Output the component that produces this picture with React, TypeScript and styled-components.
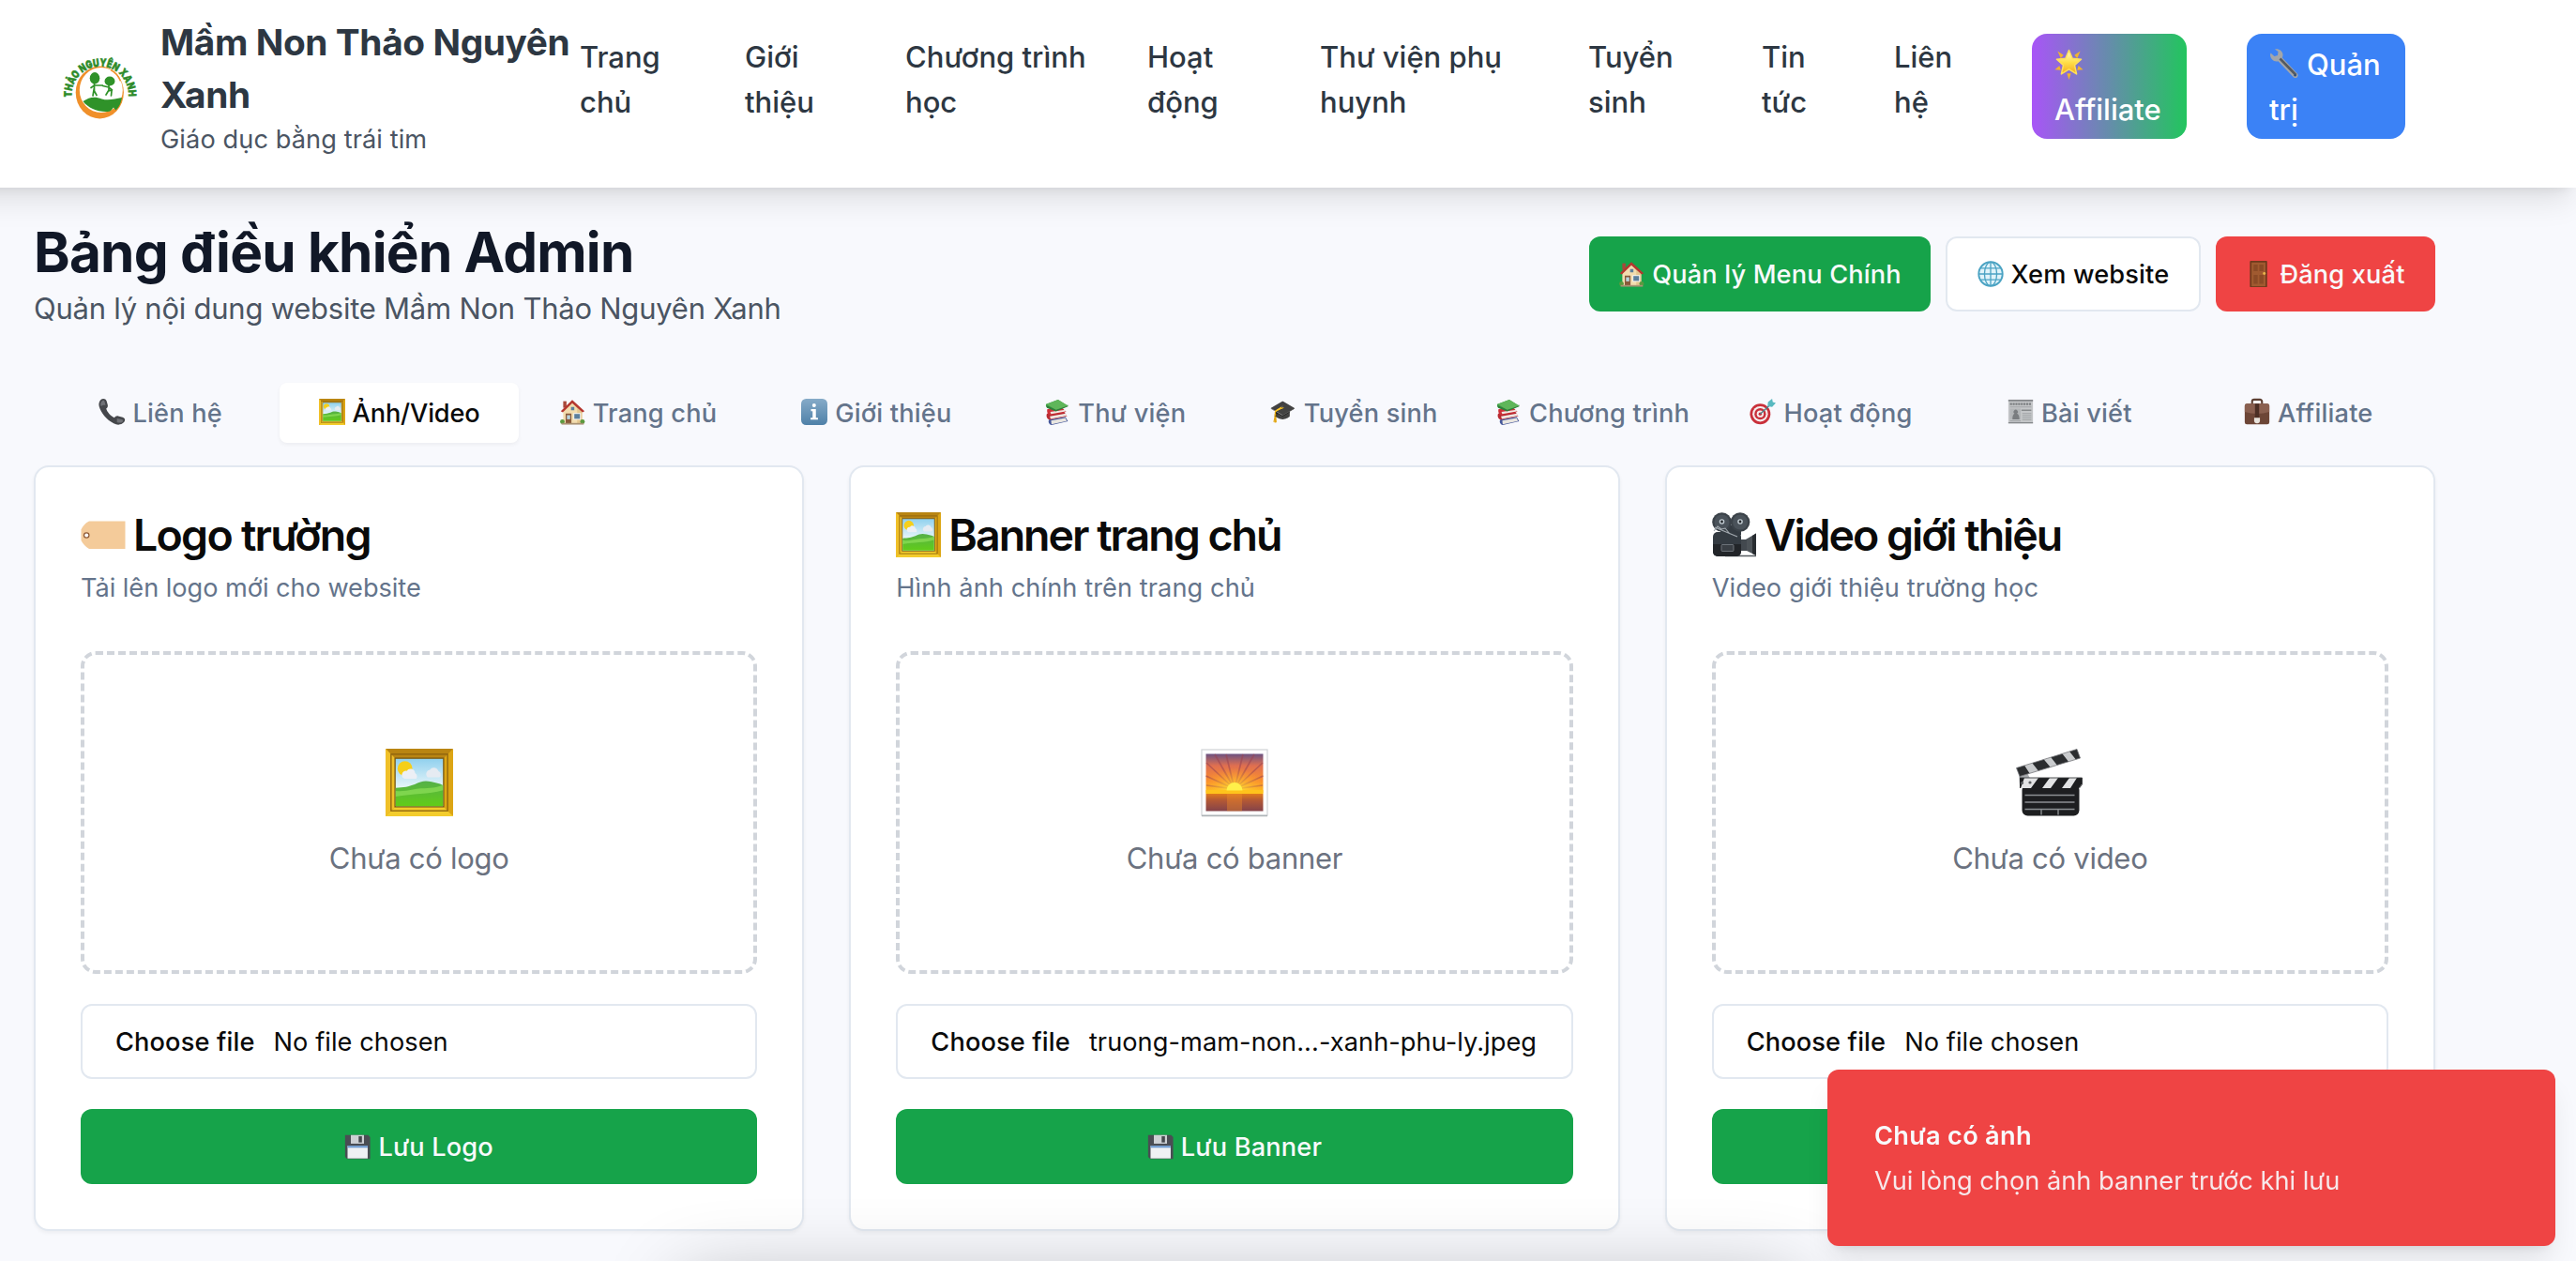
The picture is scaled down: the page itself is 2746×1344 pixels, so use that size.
import React from "react";
import styled, { createGlobalStyle, css } from "styled-components";

const GlobalStyle = createGlobalStyle`
  *, *::before, *::after { box-sizing: border-box; }
  html, body { margin: 0; background: #f8f9fd; }
  body {
    height: 1344px;
    overflow: hidden;
    font-family: Inter, "Noto Sans", sans-serif;
    color: #0a0a0a;
    -webkit-font-smoothing: antialiased;
  }
`;

/* ---------- icons ---------- */

type IconName =
  | "house" | "globe" | "door" | "phone" | "frame" | "info" | "books" | "cap"
  | "target" | "news" | "briefcase" | "tag" | "camera" | "sunrise" | "clapper"
  | "disk" | "star" | "wrench";

const IconBox = styled.span<{ $size: number; $dy?: number }>`
  display: inline-flex;
  flex: none;
  align-items: center;
  justify-content: center;
  width: ${(p) => p.$size}px;
  height: ${(p) => p.$size}px;
  font-family: "Noto Color Emoji", sans-serif;
  font-size: ${(p) => p.$size * 0.82}px;
  line-height: ${(p) => p.$size}px;
  letter-spacing: 0;
  transform: translateY(${(p) => p.$dy ?? 0}px);

  svg {
    display: block;
    width: 100%;
    height: 100%;
    overflow: visible;
  }
`;

const glyphs: Partial<Record<IconName, string>> = {
  cap: "🎓",
};

const drawings: Partial<Record<IconName, React.ReactNode>> = {
  house: (
    <svg viewBox="0 0 32 32">
      <rect x="5" y="3" width="4" height="8" fill="#a8483a" />
      <path d="M5 13 16 4l12 9v17H5z" fill="#f2dcae" />
      <path d="M16 4l12 9v17h-6V12z" fill="#e4c68f" />
      <path d="M2 15 16 1.500 31 15l-2.500 1.500L16 5.500 4.500 16.500z" fill="#b5372f" />
      <rect x="8" y="18" width="7" height="12" fill="#8a5a3a" />
      <rect x="9.500" y="20" width="4" height="5" fill="#b9d4de" />
      <rect x="18" y="18" width="8" height="7" fill="#5c7f9c" stroke="#fff" strokeWidth="1" />
      <rect x="14.500" y="10" width="4" height="4" fill="#5c7f9c" />
      <circle cx="4" cy="28" r="2.800" fill="#5b9a3e" />
      <circle cx="28.500" cy="28" r="2.800" fill="#5b9a3e" />
      <rect x="3" y="29.500" width="27" height="2" fill="#a99274" />
    </svg>
  ),
  globe: (
    <svg viewBox="0 0 32 32" fill="none" stroke="#4ba3c3" strokeWidth="1.5">
      <circle cx="16" cy="16" r="14.500" fill="#e0f3fa" strokeWidth="2.200" />
      <ellipse cx="16" cy="16" rx="7.500" ry="14.500" />
      <path d="M16 1.500v29M1.500 16h29M3.500 9h25M3.500 23h25" />
    </svg>
  ),
  door: (
    <svg viewBox="0 0 32 32">
      <rect x="5" y="0" width="21" height="32" rx="1" fill="#6f3a1c" />
      <rect x="7" y="2" width="17" height="29" fill="#a05a30" />
      <path d="M9.500 4.500h5v8h-5zM16.500 4.500h5v8h-5zM9.500 17h5v11h-5zM16.500 17h5v11h-5z" fill="#8a4a26" />
      <circle cx="22.500" cy="15.500" r="1.700" fill="#e8b64c" />
    </svg>
  ),
  phone: (
    <svg viewBox="0 0 32 32">
      <path
        d="M2.500 1.500C5-1 8.500-.5 9.800 2.500l1.400 5c.5 2.200-.4 3.600-1.800 4.500 1.200 4.500 5.600 9.200 10.100 11 1-1.500 2.500-2.500 4.500-2l5.500 1.700c3 1 3.500 4 1.500 6-3 3.200-8 3.900-12.500 1.300C9.500 25.500 3 17 .8 9.500 0 6.500.7 3.500 2.500 1.500z"
        fill="#45474b"
      />
      <path d="M4 3c1.500-1.500 3-1 3.500.5L8.500 8C6.200 7 4.500 8 3 9c-.8-2.500-.5-4.500 1-6zM22.500 24l6.500 1.500c1 .5 1 2 0 3-2.200 1-4.500 1-6.500 0z" fill="#707277" />
    </svg>
  ),
  frame: (
    <svg viewBox="0 0 32 32">
      <defs>
        <linearGradient id="frameSky" x1="0" y1="0" x2="0" y2="1">
          <stop offset="0" stopColor="#8fd0ee" />
          <stop offset=".6" stopColor="#e6f5f9" />
        </linearGradient>
        <linearGradient id="frameHill" x1="0" y1="0" x2="0" y2="1">
          <stop offset="0" stopColor="#55b04a" />
          <stop offset="1" stopColor="#62cc18" />
        </linearGradient>
      </defs>
      <rect width="32" height="32" rx=".5" fill="#dca514" />
      <path d="M0 0h32l-4.500 4.500h-23z" fill="#b98512" />
      <path d="M0 32h32l-4.500-4.500h-23z" fill="#f3cc2c" />
      <path d="M0 0v32l4.500-4.500v-23z" fill="#f0c028" />
      <rect x="2.600" y="2.600" width="26.800" height="26.800" fill="none" stroke="#8f640e" strokeWidth=".6" />
      <rect x="4.500" y="4.500" width="23" height="23" fill="url(#frameSky)" stroke="#7a5a14" strokeWidth=".6" />
      <circle cx="9.200" cy="9.400" r="3.500" fill="#f5cf1a" />
      <path d="M8 13.500a2 2 0 0 1 2-3 2.200 2.200 0 0 1 4 1 1.800 1.800 0 0 1 .5 2.700H9z" fill="#eceff5" />
      <path d="M19.500 13a2 2 0 0 1 1.500-3 2.200 2.200 0 0 1 4 .6 1.800 1.800 0 0 1 .6 3H20z" fill="#e6ebf2" />
      <path d="M4.800 18.500c4 0 6-.6 9-1.600 3-1.600 5-2 8-1.200 2 .6 3.600.6 5.400 1.600v9.900H4.800z" fill="url(#frameHill)" />
      <path d="M4.800 20c5 .5 9-1 12-1.200 4 0 8-.6 10.400-1.600v2.500c-7 2-14 1.500-22.400 3z" fill="#8fdf5a" opacity=".7" />
    </svg>
  ),
  info: (
    <svg viewBox="0 0 32 32">
      <defs>
        <linearGradient id="infoFill" x1="0" y1="0" x2="0" y2="1">
          <stop offset="0" stopColor="#86abc8" />
          <stop offset="1" stopColor="#4f81a8" />
        </linearGradient>
      </defs>
      <rect width="32" height="32" rx="6" fill="url(#infoFill)" />
      <circle cx="15.800" cy="8" r="2.300" fill="#fff" />
      <path d="M12 12.500h6v10.500h2.500v2.500h-9V23H14v-8h-2z" fill="#fff" />
    </svg>
  ),
  books: (
    <svg viewBox="0 0 32 32">
      <path d="M6 25.500 26 22l3 5.500-20 4.500c-3-.5-4.500-4-3-6.500z" fill="#46589a" />
      <path d="M8.500 26.500 26 23.500l1.500 3.500-18.500 4z" fill="#e9e6e0" />
      <path d="M3.500 18 24 15.500l4 5.500-20.500 4.500c-4 0-5.500-4.500-4-7.500z" fill="#b92b32" />
      <path d="M7 21.500l19.500-3.500 1 2.500-19.500 4z" fill="#efe9e3" />
      <path d="M4 12.500 22 11l5 5-19 3.500c-4 0-5-4-4-7z" fill="#cf3038" />
      <path d="M7.500 16 26 13.500v2L8.500 18.500z" fill="#efe9e3" />
      <path d="M2.500 6.500 17 1l12 7.500-15 6L3 10.500c-1-1-1-3-.5-4z" fill="#3f9d49" />
      <path d="M3.500 8.500 14.500 13 29 7.500v2L14.500 15.500 3.500 11z" fill="#2f7d3a" />
      <path d="M2.500 6.500 17 1l12 7.500-14.500 5z" fill="#5fb65a" />
    </svg>
  ),
  target: (
    <svg viewBox="0 0 32 32">
      <circle cx="13" cy="18.500" r="12.500" fill="#c9303a" />
      <circle cx="13" cy="18.500" r="9.400" fill="#f6eeee" />
      <circle cx="13" cy="18.500" r="7" fill="#c9303a" />
      <circle cx="13" cy="18.500" r="4.200" fill="#f6eeee" />
      <circle cx="13" cy="18.500" r="2" fill="#c9303a" />
      <path d="M13 18.500 26 6.500" stroke="#4d7f86" strokeWidth="1.600" />
      <path d="m22 9 .5-5 5-4 .8 4 3.700 1-4.500 5z" fill="#58b9c0" />
    </svg>
  ),
  news: (
    <svg viewBox="0 0 32 32">
      <rect x="1" y="1" width="30" height="29" fill="#c4c6c8" />
      <path d="M1 1h30v2H1zM1 28.500h30V30H1z" fill="#85888b" />
      <path d="M3 6.300h26" stroke="#7c7f82" strokeWidth="2.600" strokeDasharray="2.500 .8" />
      <path d="M3 10h26M18 18h11M18 20.500h11M18 23h11M18 25.500h11M3 27h13" stroke="#9c9fa2" strokeWidth="1" />
      <path d="M17 14h12" stroke="#85888b" strokeWidth="1.600" />
      <rect x="3" y="12" width="13" height="13.500" fill="#b3b6b8" />
      <path d="M6 25c0-4 1-6 2.500-7a2.600 2.600 0 1 1 3 0c2 1 3 3 3 7z" fill="#7a7d80" />
    </svg>
  ),
  briefcase: (
    <svg viewBox="0 0 32 32">
      <path d="M10 7V3.500A2.500 2.500 0 0 1 12.500 1h7A2.500 2.500 0 0 1 22 3.500V7" fill="none" stroke="#5d4033" strokeWidth="2.400" />
      <rect x="1" y="6" width="30" height="25" rx="2.500" fill="#6d4637" />
      <path d="M1 9a3 3 0 0 1 3-3h24a3 3 0 0 1 3 3v7c-10 3-20 3-30 0z" fill="#8a6050" />
      <rect x="13.500" y="6" width="5" height="18" fill="#4c2f25" />
      <path d="M12.500 23h7v3.500a3.500 3.500 0 0 1-7 0z" fill="#e8e3dc" />
    </svg>
  ),
  tag: (
    <svg viewBox="0 0 48 48">
      <path d="M9 9.500h38.500v29.500H9C5.500 37 2 33.500.5 30V18.500C2 15 5.500 11 9 9.500z" fill="#f4cb9a" />
      <circle cx="6.200" cy="24.500" r="3.300" fill="#8f5a35" />
      <circle cx="6.200" cy="24.500" r="2" fill="#fff" />
    </svg>
  ),
  camera: (
    <svg viewBox="0 0 48 48">
      <path d="M35 29.500 47 22.500V46l-12-6z" fill="#4d5358" />
      <path d="M43 25 47 22.500V46l-4-2z" fill="#282c30" />
      <path d="M14 46.500h33" stroke="#565b60" strokeWidth="1.600" />
      <path d="M9 14h22v10H9z" fill="#343b42" />
      <rect x="1" y="21" width="30" height="26" rx="5" fill="#343b42" />
      <path d="M1 34h30v8a5 5 0 0 1-5 5H6a5 5 0 0 1-5-5z" fill="#222529" />
      <rect x="31" y="29" width="6" height="12" fill="#43494f" />
      <circle cx="10.500" cy="10.500" r="10.300" fill="#3b4249" />
      <circle cx="30" cy="10.500" r="10.300" fill="#3b4249" />
      <circle cx="10.500" cy="10.500" r="8" fill="#4a525a" />
      <circle cx="30" cy="10.500" r="8" fill="#4a525a" />
      <path d="m3 16 24 10M2 20l4-5 4 3 4-1 5 6" stroke="#a4abb1" strokeWidth="1.100" fill="none" />
      <circle cx="10.500" cy="10" r="2.800" fill="#c3cdd4" />
      <circle cx="30" cy="10" r="2.800" fill="#c3cdd4" />
      <circle cx="10.500" cy="10" r="1.400" fill="#22262a" />
      <circle cx="30" cy="10" r="1.400" fill="#22262a" />
      <rect x="10" y="34.500" width="13" height="7" rx="1" fill="#3a3f45" stroke="#7d838a" strokeWidth=".8" />
    </svg>
  ),
  sunrise: (
    <svg viewBox="0 0 72 72">
      <defs>
        <linearGradient id="dawnSky" x1="0" y1="0" x2="0" y2="1">
          <stop offset="0" stopColor="#6b5282" />
          <stop offset=".3" stopColor="#e06f50" />
          <stop offset=".7" stopColor="#fa8e2c" />
          <stop offset="1" stopColor="#ffc21e" />
        </linearGradient>
        <linearGradient id="dawnSea" x1="0" y1="0" x2="0" y2="1">
          <stop offset="0" stopColor="#e07a1c" />
          <stop offset=".35" stopColor="#b65a33" />
          <stop offset="1" stopColor="#84424a" />
        </linearGradient>
        <radialGradient id="dawnGlow" cx=".5" cy=".95" r=".6">
          <stop offset="0" stopColor="#ffe93a" />
          <stop offset="1" stopColor="#ffa52a" stopOpacity="0" />
        </radialGradient>
      </defs>
      <rect x="1" y="1" width="70" height="70" fill="#fff" stroke="#cfd3d6" strokeWidth="1.200" />
      <path d="M1 71.500h70" stroke="#aeb4b7" strokeWidth="1.400" />
      <rect x="5.500" y="5.500" width="61" height="42" fill="url(#dawnSky)" />
      <path
        d="M36 43 5.500 29M36 43 6 15M36 43 15 6M36 43 27 6M36 43l9-37M36 43 57 6M36 43l30-28M36 43l30.500-14M36 43l-30-4M36 43l30-4"
        stroke="#9c4450"
        strokeWidth="1.700"
        opacity=".55"
      />
      <rect x="5.500" y="5.500" width="61" height="42" fill="url(#dawnGlow)" />
      <rect x="5.500" y="44" width="61" height="4" fill="#ffc31c" />
      <rect x="5.500" y="48" width="61" height="18.500" fill="url(#dawnSea)" />
      <path d="M28 48h16v18.500H28z" fill="#f08c28" opacity=".4" />
      <path d="M27.500 44.500a8.500 8.500 0 0 1 17 0z" fill="#fff04a" />
    </svg>
  ),
  clapper: (
    <svg viewBox="0 0 72 72">
      <defs>
        <clipPath id="armClip"><path d="M.5 20.500 65 .5l3.500 9.500L4 29.500z" /></clipPath>
        <clipPath id="barClip"><path d="M4 31h66.500v7l-3 4H4z" /></clipPath>
      </defs>
      <path d="M3 26 11 24l7 13-14 3z" fill="#a9acaf" />
      <g clipPath="url(#armClip)">
        <rect width="72" height="32" fill="#c9cbcd" />
        <path d="m-4 16 10-3 9 14-10 4zM14 11l12-4 11 13-12 5zM34 5l12-4 11 14-12 4zM54-1l12-4 11 14-12 4z" fill="#2b2d2f" />
      </g>
      <path d="M.5 20.500 65 .5l3.500 9.500L4 29.500z" fill="none" stroke="#77797c" strokeWidth=".8" />
      <rect x="6.500" y="38" width="61" height="33.500" rx="6" fill="#1d1e20" />
      <g clipPath="url(#barClip)">
        <rect x="4" y="31" width="67" height="11" fill="#e2e3e4" />
        <path d="M4 31h5l-4 11H2zM24 31h12l-8 11H16zM45 31h12l-8 11H37zM65 31h10l-8 11H58z" fill="#1d1e20" />
      </g>
      <path d="M4 31h66.500v7l-3 4" fill="none" stroke="#3a3c3e" strokeWidth=".9" />
      <path d="M9.500 49.500h53M9.500 57h53M9.500 64.500h53M27 64.500v6M45 64.500v6" stroke="#8c8f92" strokeWidth="1.400" />
      <circle cx="6.500" cy="36.500" r="1.600" fill="#5b5e61" />
      <circle cx="15" cy="36" r="1.600" fill="#5b5e61" />
    </svg>
  ),
  disk: (
    <svg viewBox="0 0 32 32">
      <path d="M1 2h28l2.500 2.500V31H3.500L1 28.500z" fill="#4a4d54" />
      <rect x="8" y="2" width="16" height="10.500" fill="#cdd0d4" />
      <rect x="17.500" y="3.500" width="4" height="7.500" fill="#44474d" />
      <rect x="4" y="15" width="24.500" height="15.500" fill="#eff1f4" />
      <rect x="4" y="15" width="24.500" height="2.500" fill="#6f9bd0" />
    </svg>
  ),
  star: (
    <svg viewBox="0 0 32 32">
      <defs>
        <linearGradient id="starFill" x1="0" y1="0" x2="0" y2="1">
          <stop offset="0" stopColor="#fffbd0" />
          <stop offset=".5" stopColor="#ffe04a" />
          <stop offset="1" stopColor="#f5a81c" />
        </linearGradient>
      </defs>
      <path d="M3.500 1.500 10 6 7 9.500zM28.500 1.500 22 6 25 9.500zM13.800 26h4.400L16 33zM.5 22l5-4.500 1.500 5zM31.500 22l-5-4.500-1.500 5z" fill="#f2b52c" />
      <path
        d="m16 .5 3.800 9.100 9.700.9-7.300 6.500 2.200 9.800L16 21.600l-8.400 5.200 2.200-9.800L2.500 10.500l9.700-.9z"
        fill="url(#starFill)"
        strokeLinejoin="round"
        stroke="#ffdf5a"
        strokeWidth="1.500"
      />
    </svg>
  ),
  wrench: (
    <svg viewBox="0 0 32 32">
      <path
        d="M1.500 4.500 5.500 8l3.500-1L9.500 3 6 .5c4-1 8 1.500 8.500 5.500.1 1.300-.1 2.500-.6 3.600L30 26.500c2 2.500-1 6-4 4L9.500 13.300C5 14.500 1 10.500 1 6.500z"
        fill="#a2a6ab"
      />
      <path d="m11.500 10.500 17 17.500" stroke="#555a61" strokeWidth="2.600" />
      <circle cx="27.600" cy="28.200" r="1.300" fill="#33507a" />
    </svg>
  ),
};

function Icon({ name, size, dy }: { name: IconName; size: number; dy?: number }) {
  return (
    <IconBox $size={size} $dy={dy} aria-hidden>
      {drawings[name] ?? glyphs[name]}
    </IconBox>
  );
}

/* ---------- header ---------- */

const Header = styled.header`
  position: relative;
  z-index: 1;
  display: flex;
  align-items: flex-start;
  height: 200px;
  margin-left: -60px;
  padding: 17px 0 0 119px;
  background: #fff;
  box-shadow: 0 20px 30px -6px rgba(0, 0, 0, 0.1), 0 8px 12px -8px rgba(0, 0, 0, 0.1);
`;

const Brand = styled.div`
  display: flex;
  align-items: center;
  gap: 16px;
  width: 559px;
  flex: none;
`;

const LogoSvg = styled.svg`
  width: 96px;
  height: 96px;
  flex: none;
  overflow: visible;
`;

const LogoText = styled.text`
  font: 900 11.5px Inter, sans-serif;
  fill: #2e8b2a;
  stroke: #2e8b2a;
  stroke-width: 0.5;
`;

const SchoolName = styled.div`
  font-size: 38.8px;
  line-height: 56px;
  font-weight: 700;
  letter-spacing: -0.01em;
  color: #2d3742;
  white-space: nowrap;
`;

const Slogan = styled.div`
  font-size: 27.2px;
  line-height: 40px;
  letter-spacing: 0.003em;
  color: #4b5563;
`;

const Nav = styled.nav`
  display: flex;
  align-items: flex-start;
  gap: 64px;
  padding-top: 19px;
`;

const navText = css`
  flex: none;
  font-size: 31px;
  line-height: 48px;
  font-weight: 500;
  white-space: nowrap;
`;

const NavLink = styled.a<{ $width: number }>`
  ${navText}
  width: ${(p) => p.$width}px;
  padding-top: 1px;
  color: #2d3742;
`;

const NavPill = styled.a<{ $width: number; $background: string }>`
  ${navText}
  width: ${(p) => p.$width}px;
  padding: 9px 24px 7px;
  border-radius: 16px;
  background: ${(p) => p.$background};
  color: #fff;
`;

const PillLine = styled.span`
  display: flex;
  align-items: center;
  gap: 8px;
  height: 48px;
`;

function Logo() {
  return (
    <LogoSvg viewBox="0 0 96 96">
      <defs>
        <path id="logoArc" d="M17.500 58.500V56a30.200 30.200 0 0 1 60.400 0v2.500" />
      </defs>
      <ellipse cx="47.300" cy="53.500" rx="25.600" ry="28" fill="#f0902a" />
      <ellipse cx="48.800" cy="51" rx="23" ry="24" fill="#fff" />
      <path d="M50 24.500c6 .5 11 3 15 8" stroke="#fff" strokeWidth="1.600" fill="none" />
      <path d="M59 29.500c5 2.500 8.500 7 10.500 12" stroke="#f0902a" strokeWidth="1.400" fill="none" />
      <path d="M29.500 63c7-5 13-5.500 20-2.500 7 2 14 0 21.500-1.500-1 6-3 10-6.500 13.500l-2.500-3c-2 3-4 5-7 4.500-10 .5-20-4-25.500-11z" fill="#2f9229" />
      <ellipse cx="42" cy="38.300" rx="5.300" ry="6.200" fill="#2f9229" />
      <ellipse cx="58" cy="41.500" rx="5.500" ry="5" fill="#2f9229" />
      <path
        d="M41.500 44v8M38 48.500l3.500-2.500 9 0M40 57l1-6 3 5.500M57 46v6M50.500 46.500l6.500 1.500 3.500 3M54 56l3-5 3 1-.5 5"
        stroke="#2f9229"
        strokeWidth="1.700"
        fill="none"
        strokeLinecap="round"
      />
      <LogoText>
        <textPath href="#logoArc" textLength="99" lengthAdjust="spacingAndGlyphs">
          THẢO NGUYÊN XANH
        </textPath>
      </LogoText>
    </LogoSvg>
  );
}

const navItems: { lines: [string, string]; width: number }[] = [
  { lines: ["Trang", "chủ"], width: 112 },
  { lines: ["Giới", "thiệu"], width: 107 },
  { lines: ["Chương trình", "học"], width: 194 },
  { lines: ["Hoạt", "động"], width: 120 },
  { lines: ["Thư viện phụ", "huynh"], width: 222 },
  { lines: ["Tuyển", "sinh"], width: 121 },
  { lines: ["Tin", "tức"], width: 77 },
  { lines: ["Liên", "hệ"], width: 83 },
];

/* ---------- dashboard ---------- */

const Main = styled.main`
  width: 2632px;
  padding: 32px 36px 0;
`;

const TitleRow = styled.div`
  display: flex;
  justify-content: space-between;
  align-items: flex-start;
  height: 120px;
`;

const PageTitle = styled.h1`
  margin: 0;
  padding-top: 1px;
  font-size: 58.5px;
  line-height: 72px;
  font-weight: 700;
  letter-spacing: -0.0133em;
  color: #111827;
`;

const PageSubtitle = styled.p`
  margin: 0;
  font-size: 31px;
  line-height: 48px;
  letter-spacing: -0.0078em;
  color: #4b5563;
`;

const Actions = styled.div`
  display: flex;
  gap: 16px;
  padding-top: 20px;
`;

type Tone = "green" | "outline" | "red";
const tones: Record<Tone, ReturnType<typeof css>> = {
  green: css`background: #16a34a; color: #f8fafc;`,
  outline: css`background: #fff; color: #0a0a0a; box-shadow: inset 0 0 0 2px #e2e8f0;`,
  red: css`background: #ef4444; color: #f8fafc;`,
};

const Button = styled.button<{ $tone: Tone; $width?: number }>`
  display: flex;
  align-items: center;
  justify-content: center;
  gap: 8px;
  width: ${(p) => (p.$width ? `${p.$width}px` : "100%")};
  height: 80px;
  padding: 1px 0 0;
  border: 0;
  border-radius: 12px;
  font: 500 27.2px/40px Inter, "Noto Sans", sans-serif;
  letter-spacing: 0.006em;
  white-space: nowrap;
  ${(p) => tones[p.$tone]}
`;

const TabList = styled.div`
  display: grid;
  grid-template-columns: repeat(10, 1fr);
  height: 80px;
  margin-top: 48px;
  padding: 8px;
`;

const Tab = styled.div<{ $active?: boolean }>`
  display: flex;
  align-items: center;
  justify-content: center;
  gap: 8px;
  height: 64px;
  border-radius: 8px;
  font-size: 27.2px;
  font-weight: 500;
  letter-spacing: 0.007em;
  white-space: nowrap;
  color: ${(p) => (p.$active ? "#0a0a0a" : "#64748b")};
  ${(p) =>
    p.$active &&
    css`
      background: #fff;
      letter-spacing: -0.006em;
      box-shadow: 0 2px 4px rgba(0, 0, 0, 0.05);
    `}
`;

const tabs: { icon: IconName; label: string; active?: boolean }[] = [
  { icon: "phone", label: "Liên hệ" },
  { icon: "frame", label: "Ảnh/Video", active: true },
  { icon: "house", label: "Trang chủ" },
  { icon: "info", label: "Giới thiệu" },
  { icon: "books", label: "Thư viện" },
  { icon: "cap", label: "Tuyển sinh" },
  { icon: "books", label: "Chương trình" },
  { icon: "target", label: "Hoạt động" },
  { icon: "news", label: "Bài viết" },
  { icon: "briefcase", label: "Affiliate" },
];

const CardGrid = styled.div`
  display: grid;
  grid-template-columns: repeat(3, 1fr);
  gap: 48px;
  margin-top: 16px;
`;

const Card = styled.section`
  padding: 48px;
  border: 2px solid #e2e8f0;
  border-radius: 16px;
  background: #fff;
  box-shadow: 0 2px 4px rgba(0, 0, 0, 0.05);
`;

const CardTitle = styled.h3<{ $tracking: number }>`
  display: flex;
  align-items: center;
  gap: 8px;
  height: 48px;
  margin: 0;
  font-size: 46.5px;
  line-height: 50px;
  font-weight: 600;
  letter-spacing: ${(p) => p.$tracking}em;
  white-space: nowrap;
`;

const CardHint = styled.p<{ $tracking: number }>`
  margin: 13px 0 47px;
  font-size: 27.2px;
  line-height: 40px;
  letter-spacing: ${(p) => p.$tracking}em;
  color: #64748b;
`;

const DropZone = styled.div`
  display: flex;
  flex-direction: column;
  align-items: center;
  justify-content: center;
  gap: 21px;
  height: 344px;
  padding-top: 5px;
  border: 4px dashed #d1d5db;
  border-radius: 16px;
`;

const DropLabel = styled.div`
  font-size: 31px;
  line-height: 48px;
  letter-spacing: -0.009em;
  color: #6b7280;
`;

const FileField = styled.div`
  display: flex;
  align-items: center;
  gap: 20px;
  height: 80px;
  margin: 32px 0;
  padding: 1px 35px 0;
  border: 2px solid #e2e8f0;
  border-radius: 12px;
  font-size: 27.2px;
  line-height: 40px;
  letter-spacing: 0.002em;
  white-space: nowrap;
`;

const ChooseFile = styled.span`
  font-weight: 500;
  letter-spacing: 0.005em;
`;

interface UploadCard {
  icon: IconName;
  title: string;
  tracking: number;
  hint: string;
  hintTracking: number;
  emptyIcon: IconName;
  empty: string;
  file: string;
  save?: string;
}

const cards: UploadCard[] = [
  {
    icon: "tag",
    title: "Logo trường",
    tracking: -0.038,
    hint: "Tải lên logo mới cho website",
    hintTracking: -0.002,
    emptyIcon: "frame",
    empty: "Chưa có logo",
    file: "No file chosen",
    save: "Lưu Logo",
  },
  {
    icon: "frame",
    title: "Banner trang chủ",
    tracking: -0.0432,
    hint: "Hình ảnh chính trên trang chủ",
    hintTracking: 0.003,
    emptyIcon: "sunrise",
    empty: "Chưa có banner",
    file: "truong-mam-non...-xanh-phu-ly.jpeg",
    save: "Lưu Banner",
  },
  {
    icon: "camera",
    title: "Video giới thiệu",
    tracking: -0.0438,
    hint: "Video giới thiệu trường học",
    hintTracking: 0.003,
    emptyIcon: "clapper",
    empty: "Chưa có video",
    file: "No file chosen",
  },
];

/* ---------- overlays ---------- */

const BottomShade = styled.div`
  position: fixed;
  left: 728px;
  top: 1366px;
  width: 1186px;
  height: 200px;
  box-shadow: 0 0 84px rgba(0, 0, 0, 0.29);
  pointer-events: none;
`;

const Toast = styled.div`
  position: fixed;
  right: 22px;
  bottom: 16px;
  width: 776px;
  height: 188px;
  padding: 51px 50px 49px;
  border-radius: 12px;
  background: #ef4444;
  color: #f8fafc;
  font-size: 27.2px;
  line-height: 40px;
  box-shadow: 0 20px 30px -6px rgba(0, 0, 0, 0.1), 0 8px 12px -8px rgba(0, 0, 0, 0.1);
`;

const ToastTitle = styled.div`
  font-weight: 600;
  letter-spacing: 0.01em;
`;

const ToastText = styled.div`
  margin-top: 8px;
  opacity: 0.9;
`;

export default function App() {
  return (
    <>
      <GlobalStyle />
      <Header>
        <Brand>
          <Logo />
          <div>
            <SchoolName>
              Mầm Non Thảo Nguyên
              <br />
              Xanh
            </SchoolName>
            <Slogan>Giáo dục bằng trái tim</Slogan>
          </div>
        </Brand>
        <Nav>
          {navItems.map(({ lines, width }) => (
            <NavLink key={lines.join(" ")} $width={width}>
              {lines[0]}
              <br />
              {lines[1]}
            </NavLink>
          ))}
          <NavPill $width={165} $background="linear-gradient(90deg, #a855f7, #22c55e)">
            <PillLine><Icon name="star" size={31} dy={-1} /></PillLine>
            <PillLine>Affiliate</PillLine>
          </NavPill>
          <NavPill $width={169} $background="#3b82f6">
            <PillLine><Icon name="wrench" size={32} dy={-1} />Quản</PillLine>
            <PillLine>trị</PillLine>
          </NavPill>
        </Nav>
      </Header>

      <Main>
        <TitleRow>
          <div>
            <PageTitle>Bảng điều khiển Admin</PageTitle>
            <PageSubtitle>Quản lý nội dung website Mầm Non Thảo Nguyên Xanh</PageSubtitle>
          </div>
          <Actions>
            <Button $tone="green" $width={364}>
              <Icon name="house" size={28} dy={-1} />Quản lý Menu Chính
            </Button>
            <Button $tone="outline" $width={272}>
              <Icon name="globe" size={28} dy={-1} />Xem website
            </Button>
            <Button $tone="red" $width={234}>
              <Icon name="door" size={28} dy={-1} />Đăng xuất
            </Button>
          </Actions>
        </TitleRow>

        <TabList>
          {tabs.map((tab) => (
            <Tab key={tab.label} $active={tab.active}>
              <Icon name={tab.icon} size={28} dy={-1} />
              {tab.label}
            </Tab>
          ))}
        </TabList>

        <CardGrid>
          {cards.map((card) => (
            <Card key={card.title}>
              <CardTitle $tracking={card.tracking}>
                <Icon name={card.icon} size={48} />
                <span>{card.title}</span>
              </CardTitle>
              <CardHint $tracking={card.hintTracking}>{card.hint}</CardHint>
              <DropZone>
                <Icon name={card.emptyIcon} size={72} />
                <DropLabel>{card.empty}</DropLabel>
              </DropZone>
              <FileField>
                <ChooseFile>Choose file</ChooseFile>
                <span>{card.file}</span>
              </FileField>
              <Button $tone="green">
                {card.save && (
                  <>
                    <Icon name="disk" size={28} dy={-1} />
                    {card.save}
                  </>
                )}
              </Button>
            </Card>
          ))}
        </CardGrid>
      </Main>

      <BottomShade />
      <Toast>
        <ToastTitle>Chưa có ảnh</ToastTitle>
        <ToastText>Vui lòng chọn ảnh banner trước khi lưu</ToastText>
      </Toast>
    </>
  );
}
